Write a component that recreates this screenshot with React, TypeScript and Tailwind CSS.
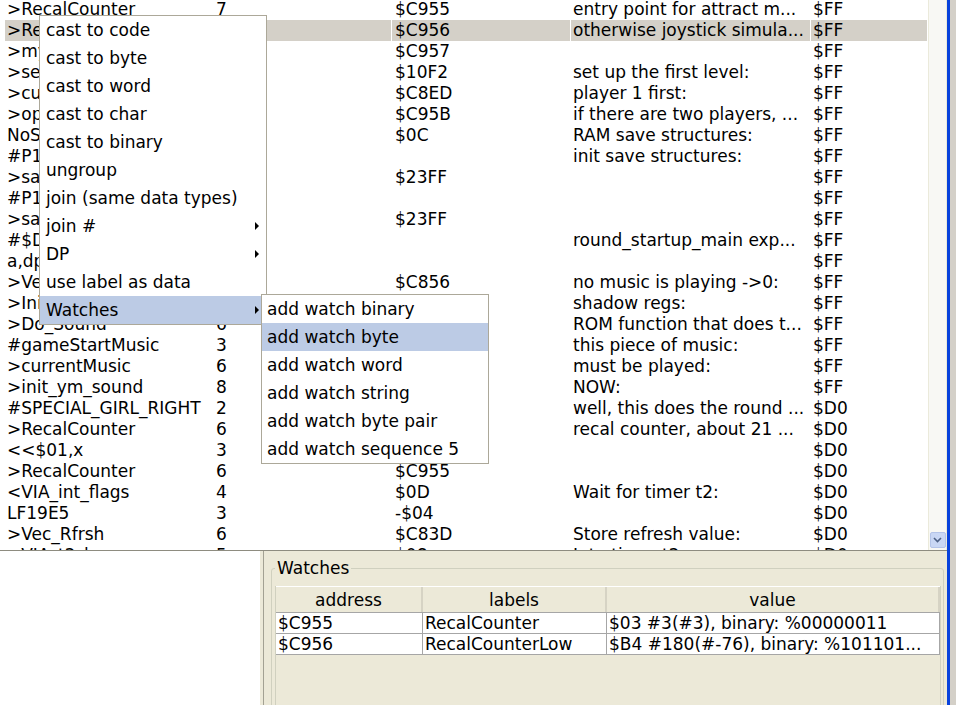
import { JSX } from "react";

type Row = [string, string, string, string, string];

const rows: Row[] = [
  [">RecalCounter", "7", "$C955", "entry point for attract m...", "$FF"],
  [">RecalCounterLow", "6", "$C956", "otherwise joystick simula...", "$FF"],
  [">mysterious", "5", "$C957", "", "$FF"],
  [">set_level", "6", "$10F2", "set up the first level:", "$FF"],
  [">curr_player", "6", "$C8ED", "player 1 first:", "$FF"],
  [">opponent", "6", "$C95B", "if there are two players, ...", "$FF"],
  ["NoSaves", "2", "$0C", "RAM save structures:", "$FF"],
  ["#P1_save", "3", "", "init save structures:", "$FF"],
  [">save_start", "6", "$23FF", "", "$FF"],
  ["#P1_save", "3", "", "", "$FF"],
  [">save_start", "6", "$23FF", "", "$FF"],
  ["#$D0", "2", "", "round_startup_main exp...", "$FF"],
  ["a,dp", "2", "", "", "$FF"],
  [">Vec_Music", "6", "$C856", "no music is playing ->0:", "$FF"],
  [">Init_Music", "6", "$F68D", "shadow regs:", "$FF"],
  [">Do_Sound", "6", "$F289", "ROM function that does t...", "$FF"],
  ["#gameStartMusic", "3", "$FD0D", "this piece of music:", "$FF"],
  [">currentMusic", "6", "$C8A0", "must be played:", "$FF"],
  [">init_ym_sound", "8", "$F533", "NOW:", "$FF"],
  ["#SPECIAL_GIRL_RIGHT", "2", "$01", "well, this does the round ...", "$D0"],
  [">RecalCounter", "6", "$C955", "recal counter, about 21 ...", "$D0"],
  ["<<$01,x", "3", "", "", "$D0"],
  [">RecalCounter", "6", "$C955", "", "$D0"],
  ["<VIA_int_flags", "4", "$0D", "Wait for timer t2:", "$D0"],
  ["LF19E5", "3", "-$04", "", "$D0"],
  [">Vec_Rfrsh", "6", "$C83D", "Store refresh value:", "$D0"],
  ["<VIA_t2_lo", "5", "$08", "Into timer t2...", "$D0"],
];

const colWidths = ["w-[208px]", "w-[177px]", "w-[178px]", "w-[239px]", "w-[116px]"];

const menuItems: { label: string; sub?: boolean }[] = [
  { label: "cast to code" },
  { label: "cast to byte" },
  { label: "cast to word" },
  { label: "cast to char" },
  { label: "cast to binary" },
  { label: "ungroup" },
  { label: "join (same data types)" },
  { label: "join #", sub: true },
  { label: "DP", sub: true },
  { label: "use label as data" },
  { label: "Watches", sub: true },
];

const watchItems = [
  "add watch binary",
  "add watch byte",
  "add watch word",
  "add watch string",
  "add watch byte pair",
  "add watch sequence 5",
];

const watches = [
  ["$C955", "RecalCounter", "$03 #3(#3), binary: %00000011"],
  ["$C956", "RecalCounterLow", "$B4 #180(#-76), binary: %101101..."],
];

function Arrow() {
  return (
    <span className="ml-auto mr-[7px] w-0 h-0 border-y-[4px] border-y-transparent border-l-[4px] border-l-black" />
  );
}

export default function App(): JSX.Element {
  return (
    <div className="relative w-[956px] h-[705px] overflow-hidden flex bg-white text-black text-[17px] font-['DejaVu_Sans','Liberation_Sans',sans-serif]">
      <div className="w-[947px] flex flex-col">
        {/* label table */}
        <div className="h-[550px] flex">
          <div className="w-[928px] overflow-hidden">
            <div className="-mt-[1px]">
              {rows.map((row, i) => (
                <div key={i} className="h-[21px] flex pl-[5px] gap-[1px] leading-[21px]">
                  {row.map((cell, j) => (
                    <div
                      key={j}
                      className={`${colWidths[j]} shrink-0 overflow-hidden whitespace-nowrap ${
                        j === 2 ? "pl-[3px]" : "pl-[2px]"
                      } ${i === 1 ? "bg-[#d4d0c8]" : ""}`}
                    >
                      {cell}
                    </div>
                  ))}
                </div>
              ))}
            </div>
          </div>
          {/* scrollbar */}
          <div className="w-[19px] bg-[#f8f8f4] border-l border-r border-[#ebeadb] flex flex-col justify-end items-center pb-[2px]">
            <div className="w-[16px] h-[16px] rounded-[2px] border border-[#b4c4e8] bg-[#c9d7f4] flex items-center justify-center">
              <svg width="9" height="6" viewBox="0 0 9 6">
                <path d="M1 1 L4.5 4.5 L8 1" fill="none" stroke="#4d6185" strokeWidth="1.6" />
              </svg>
            </div>
          </div>
        </div>

        {/* splitter */}
        <div className="h-[5px] bg-[#ece9d8] border-b border-[#8e8c80]" />

        <div className="flex-1 flex">
          <div className="w-[260px] bg-white" />
          <div className="w-[3px] bg-[#ece9d8]" />
          <div className="flex-1 bg-[#ece9d8] border-l border-[#a3a193] pl-[7px] pr-[3px] pt-[7px]">
            <fieldset className="h-[200px] border border-[#d0d0bf] rounded-[3px] pl-[3px] pr-[2px]">
              <legend className="ml-[0px] px-[2px] leading-[20px]">Watches</legend>
              <div className="mt-[8px] h-[140px] border-l border-r border-[#d0d0bf]">
                <div className="h-[26px] flex leading-[26px] border-t border-white">
                  <div className="w-[147px] text-center border-r-2 border-r-[#d6d3c4]">address</div>
                  <div className="w-[184px] text-center border-r-2 border-r-[#d6d3c4]">labels</div>
                  <div className="flex-1 text-center border-r-2 border-r-[#d6d3c4]">value</div>
                </div>
                <div className="border-t border-[#a6a6a6]">
                  {watches.map((w, i) => (
                    <div key={i} className="h-[21px] flex bg-white border-b border-[#a6a6a6] leading-[20px]">
                      <div className="w-[147px] pl-[2px] border-r border-[#a6a6a6] whitespace-nowrap overflow-hidden">{w[0]}</div>
                      <div className="w-[184px] pl-[2px] border-r border-[#a6a6a6] whitespace-nowrap overflow-hidden">{w[1]}</div>
                      <div className="flex-1 pl-[2px] border-r border-[#a6a6a6] whitespace-nowrap overflow-hidden">{w[2]}</div>
                    </div>
                  ))}
                </div>
              </div>
            </fieldset>
          </div>
        </div>
      </div>
      <div className="w-[3px] bg-[#0842dc]" />
      <div className="w-[6px] bg-[#d4d0c8]" />

      {/* context menu */}
      <div className="absolute left-[39px] top-[15px] w-[228px] bg-white border border-[#aca899]">
        {menuItems.map((m) => (
          <div
            key={m.label}
            className={`h-[28px] flex items-center pl-[6px] leading-[28px] whitespace-nowrap ${
              m.label === "Watches" ? "bg-[#bccbe5]" : ""
            }`}
          >
            {m.label}
            {m.sub && <Arrow />}
          </div>
        ))}
      </div>

      {/* watches submenu */}
      <div className="absolute left-[261px] top-[294px] w-[228px] bg-white border border-[#aca899]">
        {watchItems.map((label) => (
          <div
            key={label}
            className={`h-[28px] pl-[5px] leading-[28px] whitespace-nowrap ${
              label === "add watch byte" ? "bg-[#bccbe5]" : ""
            }`}
          >
            {label}
          </div>
        ))}
      </div>
    </div>
  );
}
